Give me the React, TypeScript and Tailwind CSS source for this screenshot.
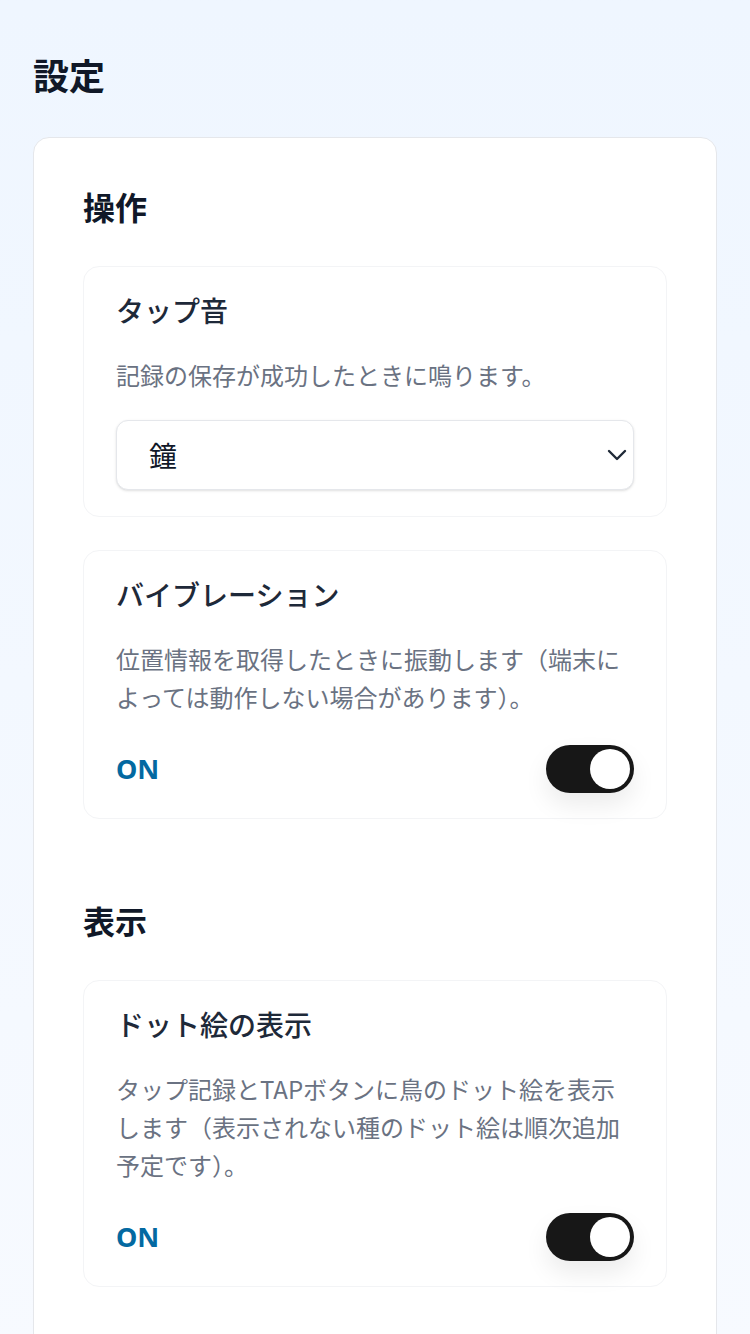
import { useState } from "react";

const font = { fontFamily: '"Noto Sans CJK JP", "Noto Sans", sans-serif' };

function Toggle({ on, onChange }: { on: boolean; onChange: () => void }) {
  return (
    <button
      type="button"
      onClick={onChange}
      className={`relative h-[48px] w-[88px] rounded-full shadow-[0_12px_24px_rgba(0,0,0,0.08)] ${
        on ? "bg-[#171717]" : "bg-gray-300"
      }`}
    >
      <span
        className={`absolute top-[4px] h-[40px] w-[40px] rounded-full bg-white ${
          on ? "left-[44px]" : "left-[4px]"
        }`}
      />
    </button>
  );
}

function SettingCard({
  title,
  desc,
  tight,
  children,
}: {
  title: string;
  desc: string;
  tight?: boolean;
  children: React.ReactNode;
}) {
  return (
    <div
      className={`rounded-2xl border border-gray-100 bg-white px-8 pt-[25px] ${
        tight ? "pb-[23px]" : "pb-[26px]"
      }`}
    >
      <h3 className="text-[28px] font-medium leading-[36px] text-gray-800">{title}</h3>
      <p className="mt-[28px] text-[24px] leading-[38px] text-gray-500">{desc}</p>
      {children}
    </div>
  );
}

function OnRow({ on, onChange }: { on: boolean; onChange: () => void }) {
  return (
    <div className="mt-[27px] flex h-[52px] items-center justify-between">
      <span
        className="text-[27px] font-bold text-[#0369a1]"
        style={{ fontFamily: '"Noto Sans", "Noto Sans CJK JP", sans-serif' }}
      >
        {on ? "ON" : "OFF"}
      </span>
      <Toggle on={on} onChange={onChange} />
    </div>
  );
}

export default function App() {
  const [vibrate, setVibrate] = useState(true);
  const [dots, setDots] = useState(true);

  return (
    <div className="min-h-screen bg-gradient-to-b from-[#eff6ff] to-[#f7faff] px-[33px] pt-[50px]" style={font}>
      <h1 className="text-[36px] font-bold leading-[48px] text-gray-900">設定</h1>

      <div className="mt-[39px] rounded-2xl border border-gray-200 bg-white px-[49px] pt-12 pb-16">
        {/* 操作 */}
        <h2 className="text-[32px] font-bold leading-[40px] text-gray-900">操作</h2>
        <div className="mt-10 space-y-[33px]">
          <SettingCard title="タップ音" desc="記録の保存が成功したときに鳴ります。">
            <div className="relative mt-[26px]">
              <select
                className="h-[70px] w-full appearance-none rounded-xl border border-gray-200 bg-white pl-8 text-[28px] text-gray-900 shadow-sm outline-none"
                style={font}
                defaultValue="bell"
              >
                <option value="bell">鐘</option>
                <option value="none">なし</option>
              </select>
              <svg
                className="pointer-events-none absolute right-[7px] top-1/2 -translate-y-1/2"
                width="20"
                height="12"
                viewBox="0 0 20 12"
                fill="none"
              >
                <path d="M2 2l8 8 8-8" stroke="#1f2937" strokeWidth="2.4" strokeLinecap="round" strokeLinejoin="round" />
              </svg>
            </div>
          </SettingCard>

          <SettingCard
            tight
            title="バイブレーション"
            desc="位置情報を取得したときに振動します（端末によっては動作しない場合があります）。"
          >
            <OnRow on={vibrate} onChange={() => setVibrate(!vibrate)} />
          </SettingCard>
        </div>

        {/* 表示 */}
        <h2 className="mt-[81px] text-[32px] font-bold leading-[40px] text-gray-900">表示</h2>
        <div className="mt-10 space-y-8">
          <SettingCard
            tight
            title="ドット絵の表示"
            desc="タップ記録とTAPボタンに鳥のドット絵を表示します（表示されない種のドット絵は順次追加予定です）。"
          >
            <OnRow on={dots} onChange={() => setDots(!dots)} />
          </SettingCard>
        </div>
      </div>
    </div>
  );
}
